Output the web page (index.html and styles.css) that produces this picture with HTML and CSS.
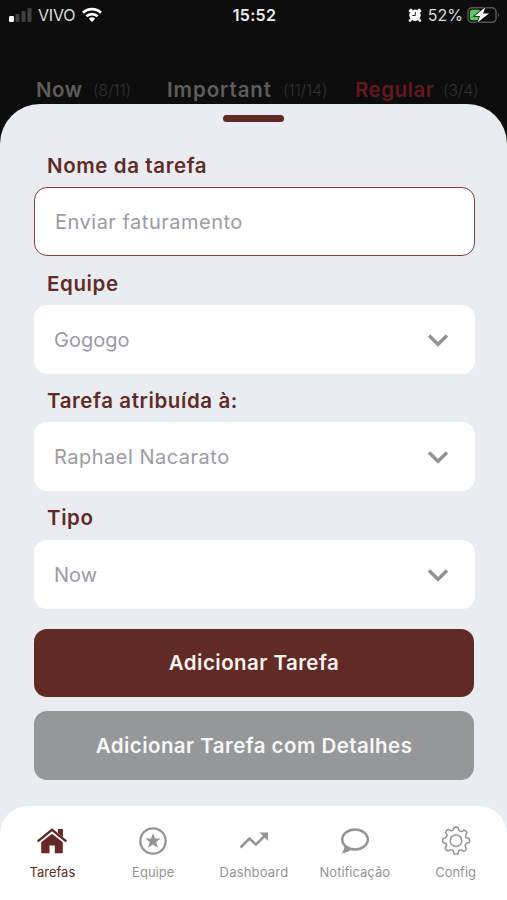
FILE: index.html
```html
<!DOCTYPE html>
<html lang="pt-BR">
<head>
  <meta charset="UTF-8" />
  <meta name="viewport" content="width=device-width, initial-scale=1.0" />
  <title>Adicionar Tarefa</title>
  <link rel="stylesheet" href="styles.css">
</head>
<body>
  <header class="status">
    <div class="status-left">
      <svg width="24" height="16" viewBox="0 0 24 16">
        <rect x="0" y="9" width="5" height="6" rx="1.3" fill="#fff" />
        <rect x="6.5" y="7" width="4" height="8" rx="1" fill="#414141" />
        <rect x="12.5" y="4" width="4" height="11" rx="1" fill="#414141" />
        <rect x="18.5" y="1" width="4" height="14" rx="1" fill="#414141" />
      </svg>
      <span class="carrier">VIVO</span>
      <svg class="wifi" width="20" height="16" viewBox="0 0 20 16" fill="none" stroke="#fff" stroke-width="2.7">
        <path d="M1 5.7a13 13 0 0 1 18 0" />
        <path d="M4.5 9.3a8 8 0 0 1 11 0" />
        <path d="M6.9 11.8a4.500 4.500 0 0 1 6.200 0L10 15z" fill="#fff" stroke="none" />
      </svg>
    </div>
    <div class="clock">15:52</div>
    <div class="status-right">
      <svg width="14" height="14" viewBox="0 0 14 14">
        <path d="M2 3L3 2M12 3L11 2M3 11.500L2 12.600M11 11.500l1 1.100" stroke="#eee" stroke-width="2.600" stroke-linecap="round" />
        <circle cx="7" cy="7.200" r="5.700" fill="#fff" />
        <path d="M7.300 4v3.500H4.400" fill="none" stroke="#222" stroke-width="1" />
      </svg>
      <span class="percent">52%</span>
      <svg width="33" height="18" viewBox="0 0 33 18">
        <rect x="1" y="1.700" width="28" height="14.600" rx="4" fill="none" stroke="#565656" stroke-width="1.500" />
        <path d="M31 6.500q2 2.500 0 5z" fill="#565656" />
        <rect x="3" y="3.700" width="10.500" height="10.600" rx="2" fill="#5ac85c" />
        <path d="M18.500 1L7.700 10h5.300L10.500 16.500 22 7.500h-6z" fill="#fff" stroke="#0d0d0d" stroke-width="1.500" paint-order="stroke" />
      </svg>
    </div>
  </header>

  <div class="tabs">
    <span class="tab now">Now</span><span class="count count-now">(8/11)</span>
    <span class="tab important">Important</span><span class="count count-important">(11/14)</span>
    <span class="tab regular">Regular</span><span class="count count-regular">(3/4)</span>
  </div>

  <main class="sheet">
    <div class="handle"></div>
    <form class="form">
      <div class="label">Nome da tarefa</div>
      <div class="field active"><span class="wide">Enviar faturamento</span></div>

      <div class="label">Equipe</div>
      <div class="field">
        <span>Gogogo</span>
        <svg class="chevron" width="22" height="14" viewBox="0 0 22 14"><path d="M2 2.500l9 8.800 9-8.800" /></svg>
      </div>

      <div class="label">Tarefa atribuída à:</div>
      <div class="field">
        <span class="wide">Raphael Nacarato</span>
        <svg class="chevron" width="22" height="14" viewBox="0 0 22 14"><path d="M2 2.500l9 8.800 9-8.800" /></svg>
      </div>

      <div class="label">Tipo</div>
      <div class="field">
        <span>Now</span>
        <svg class="chevron" width="22" height="14" viewBox="0 0 22 14"><path d="M2 2.500l9 8.800 9-8.800" /></svg>
      </div>

      <button type="button" class="btn primary">Adicionar Tarefa</button>
      <button type="button" class="btn secondary">Adicionar Tarefa com Detalhes</button>
    </form>

    <nav class="nav">
      <a class="nav-item selected">
        <svg width="32" height="32" viewBox="0 0 32 32">
          <path d="M22 4h4.800v9L22 9z" fill="currentColor" />
          <path d="M1.800 16.500L16 4.800l14.200 11.700" fill="none" stroke="#fff" stroke-width="4.500" />
          <path d="M22 4h4.800v8L22 8z" fill="currentColor" />
          <path d="M1.700 16.400L16 4.900l14.300 11.500" fill="none" stroke="currentColor" stroke-width="2.500" />
          <path d="M5.200 17.300L16 8.700l10.800 8.600V27q0 1.300-1.300 1.300h-6.700V20.500h-5.300v7.800H6.500q-1.300 0-1.300-1.300z" fill="currentColor" />
        </svg>
        <span>Tarefas</span>
      </a>
      <a class="nav-item">
        <svg width="32" height="32" viewBox="0 0 32 32">
          <circle cx="16" cy="16" r="12.700" fill="none" stroke="currentColor" stroke-width="2.300" />
          <path d="M16 8.200l2 5.300h5.600L19.200 17l1.600 5.700-4.800-3.200-4.800 3.200 1.600-5.700-4.400-3.500H14z" fill="currentColor" />
        </svg>
        <span>Equipe</span>
      </a>
      <a class="nav-item">
        <svg width="32" height="32" viewBox="0 0 32 32">
          <path d="M2.500 22.500l9-8.900 6.400 6L27 10.500" fill="none" stroke="currentColor" stroke-width="2.500" />
          <path d="M21.500 7.500H30v8.500z" fill="currentColor" />
        </svg>
        <span class="dashboard">Dashboard</span>
      </a>
      <a class="nav-item">
        <svg width="32" height="32" viewBox="0 0 32 32">
          <ellipse cx="16" cy="14.500" rx="12.800" ry="10" fill="none" stroke="currentColor" stroke-width="2.500" />
          <path d="M5.300 21q.2 5-3 7.200 5.700-.2 9.500-3.500z" fill="currentColor" />
        </svg>
        <span>Notificação</span>
      </a>
      <a class="nav-item">
        <svg width="32" height="32" viewBox="0 0 32 32" fill="none" stroke="currentColor" stroke-width="1.500" stroke-linejoin="round">
          <path d="M14 2.500q2-.8 4 0c.4 2.700 1.400 3.900 3 4 1 .1 2-.8 3.200-1.500q2 .8 2.700 2.700c-1.600 2.300-1.700 3.700-.8 4.700.7.800 1.800.8 3.100 1.200q.8 2 0 4c-2.700.4-3.900 1.400-4 3-.1 1 .6 2 1.300 3.100q-.8 2-2.700 2.700c-2.300-1.600-3.700-1.700-4.700-.8-.7.700-.8 1.800-1.100 3.100q-2 .8-4 0c-.4-2.700-1.400-3.900-3-4-1-.1-2 .6-3.100 1.300q-2-.8-2.700-2.700c1.600-2.300 1.700-3.700.8-4.700-.7-.7-1.800-.8-3-1.100q-.8-2 0-4c2.700-.4 3.900-1.400 4-3 .1-1-.7-2-1.400-3.100Q6.400 5 8.300 4.300c2.300 1.600 3.700 1.700 4.700.8.6-.6.700-1.600 1-2.600z" />
          <circle cx="16" cy="15.700" r="5.800" />
        </svg>
        <span>Config</span>
      </a>
    </nav>
  </main>
</body>
</html>
```
FILE: styles.css
```css
* { box-sizing: border-box; }
body { margin: 0; height: 900px; overflow: hidden; display: flex; flex-direction: column; background: #0d0d0d; font-family: Inter, "Open Sans", sans-serif; }
svg { display: block; flex: none; }

.status { height: 29px; display: grid; grid-template-columns: 1fr auto 1fr; align-items: center; padding: 0 7px 0 9px; color: #ddd; font: 16px Inter, sans-serif; }
.status-left, .status-right { display: flex; align-items: center; }
.status-right { justify-content: flex-end; }
.carrier { margin-left: 5px; letter-spacing: -.2px; }
.wifi { margin-left: 7px; }
.clock { color: #eee; font-weight: 600; letter-spacing: .3px; }
.percent { margin: 0 4px 0 6px; }

.tabs { height: 75px; display: flex; align-items: center; padding: 47px 0 0 36px; line-height: 26px; white-space: nowrap; }
.tab { font-size: 20.5px; font-weight: 600; letter-spacing: .5px; color: #5d5d5d; }
.count { font-size: 16px; font-weight: 300; letter-spacing: -.2px; color: #303030; }
.now { width: 57px; }
.count-now { width: 74px; }
.important { width: 116px; letter-spacing: .9px; }
.count-important { width: 72px; }
.regular { width: 88px; color: #641819; }

.sheet { flex: 1; display: flex; flex-direction: column; background: #e9edf1; border-radius: 40px 40px 0 0; }
.handle { width: 61px; height: 7px; margin: 10.5px auto 0; border-radius: 4px; background: #652a25; }
.form { display: flex; flex-direction: column; padding: 17.5px 32px 0 34px; }
.label { height: 48.4px; padding: 5px 0 0 13px; display: flex; align-items: center; color: #622a26; font-size: 20.5px; font-weight: 600; letter-spacing: .6px; }
.field { height: 69px; padding: 1px 26px 0 20px; display: flex; align-items: center; justify-content: space-between; border-radius: 13px; background: #fff; color: #9c9ba6; font-size: 20px; }
.wide { letter-spacing: .5px; }
.active { border: 1.5px solid #863d3c; }
.chevron { fill: none; stroke: #929292; stroke-width: 3.4; }
.btn { width: 440px; height: 68.5px; margin: 0; padding: 0; border: none; border-radius: 13px; color: #fbf4f1; font: 600 20.5px Inter, sans-serif; letter-spacing: .45px; }
.primary { margin-top: 20px; background: #622a25; }
.secondary { margin-top: 14px; background: #969798; color: #f8f8f8; }

.nav { flex: none; height: 94px; margin-top: auto; padding: 0 1px 0 2px; display: grid; grid-template-columns: repeat(5, 1fr); border-radius: 28px 28px 0 0; background: #fff; }
.nav-item { display: flex; flex-direction: column; align-items: center; padding-top: 19px; color: #949494; font-size: 13px; line-height: 16px; }
.nav-item span { margin-top: 7px; }
.nav-item .dashboard { letter-spacing: .2px; }
.selected { color: #652a27; }
```
